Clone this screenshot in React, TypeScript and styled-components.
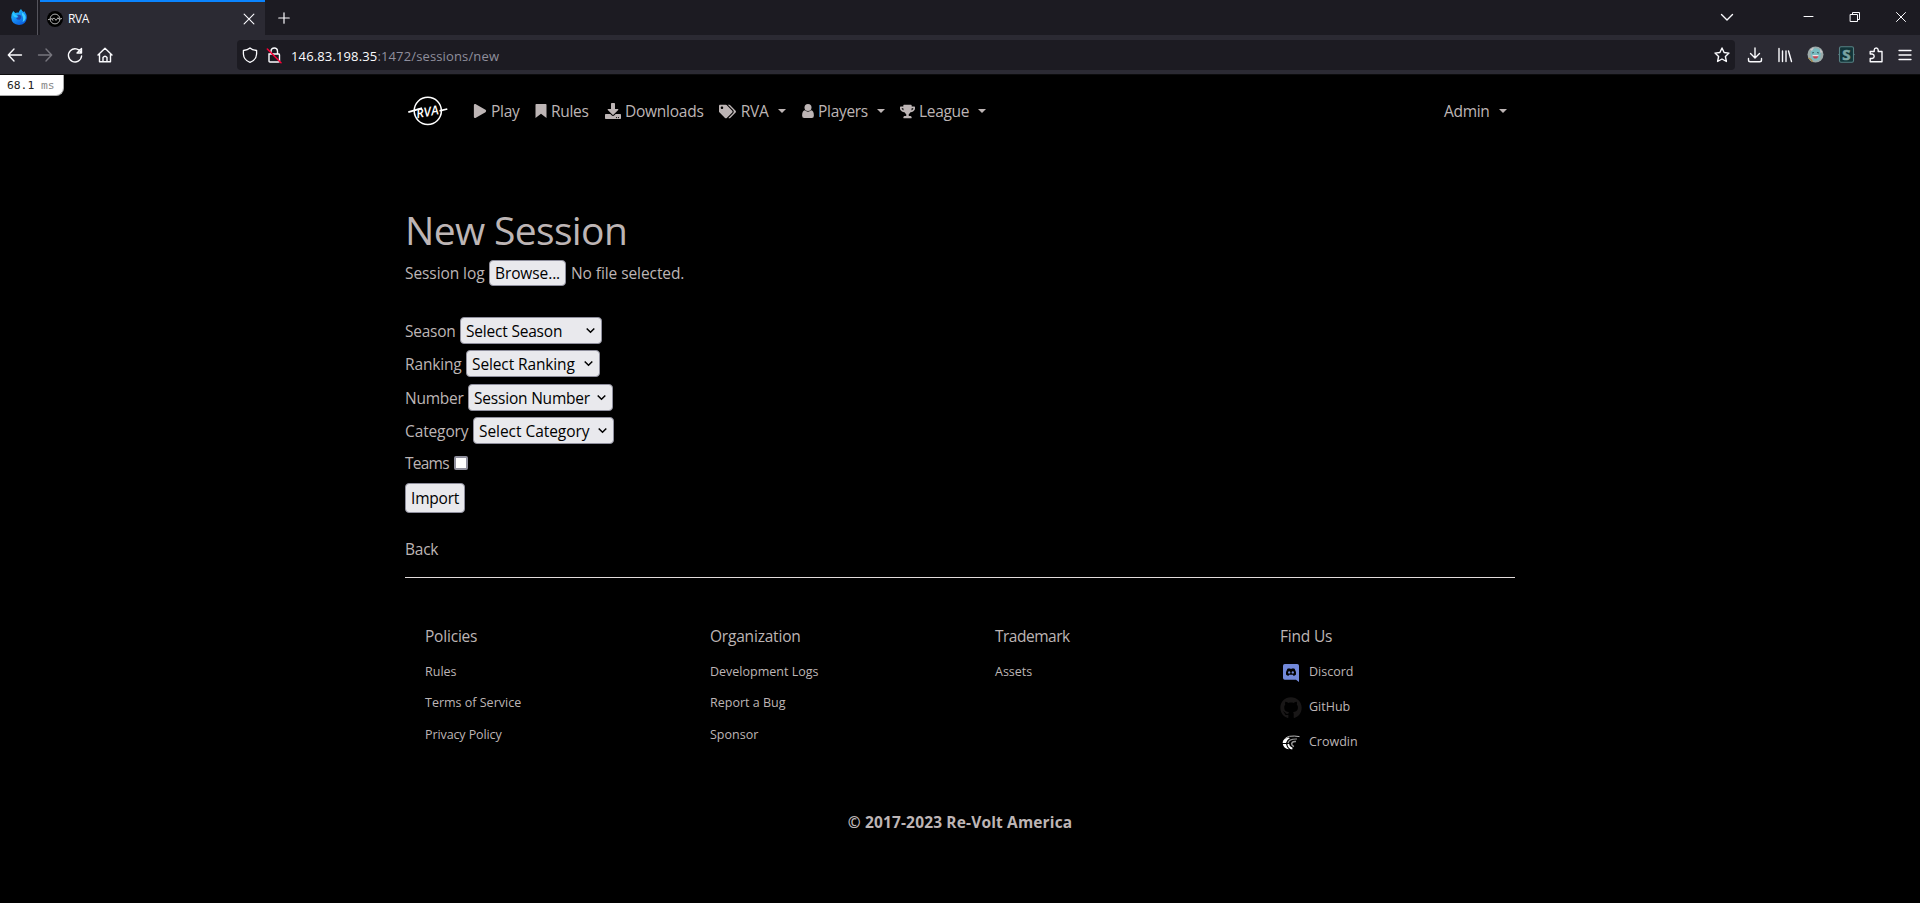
import React from 'react';
import styled, { createGlobalStyle } from 'styled-components';
import { FaPlay, FaDownload, FaTags, FaTrophy, FaGithub } from 'react-icons/fa';

const Global = createGlobalStyle`
  * { box-sizing: border-box; }
  body { margin: 0; background: #000; font-family: "Open Sans", "Noto Sans", sans-serif; color: #bdb5b5; overflow: hidden; }
  svg { display: block; flex: none; overflow: visible; }
  a { color: inherit; text-decoration: none; }
`;

const Page = styled.div`height: 903px; display: flex; flex-direction: column;`;

/* Browser chrome */
const TabBar = styled.div`height: 35px; background: #1c1b22; display: flex; color: #fbfbfe;`;
const PinnedTab = styled.div`width: 38px; padding: 8px 0 0 10px; border-right: 1px solid #55545c;`;
const Tab = styled.div`
  width: 225px; margin-left: 2px; padding: 0 10px 0 7px; border-top: 2px solid #0a84ff; background: #2b2a33;
  display: flex; align-items: center; font-size: 12px; letter-spacing: -0.4px;
`;
const TabTitle = styled.span`flex: 1; margin-left: 5px;`;
const NewTab = styled.div`padding: 12px 0 0 13px; flex: 1;`;
const WindowButtons = styled.div`display: flex; padding-top: 10px;`;
const WindowButton = styled.div<{ $w: number }>`width: ${p => p.$w}px;`;
const Toolbar = styled.div`
  height: 40px; background: #2b2a33; border-bottom: 1px solid #0c0c0d; display: flex; align-items: center;
`;
const NavButtons = styled.div`display: flex; gap: 14px; width: 237px; padding-left: 7px;`;
const UrlBar = styled.div`
  width: 1498px; height: 30px; border-radius: 4px; background: #1c1b22; display: flex; align-items: center; padding: 0 5px;
`;
const LockSlot = styled.span`margin-left: 8px;`;
const Url = styled.div`
  flex: 1; font-size: 13px; line-height: 20px; letter-spacing: 0.14px; color: #fbfbfe; margin-left: 9px; padding-top: 2px;
`;
const UrlPath = styled.span`color: #8f8f9d;`;
const ToolbarIcons = styled.div`display: flex; align-items: center; gap: 14px; margin-left: 12px;`;

/* Site */
const Timing = styled.div`
  width: 64px; height: 21px; background: #fff; color: #222; border: 1px solid #aaa; border-width: 0 1px 1px 0;
  border-bottom-right-radius: 8px; padding-left: 7px; font: 11.3px/22px "DejaVu Sans Mono", monospace;
`;
const Unit = styled.span`color: #888;`;
const Container = styled.div`width: 1110px; margin: 0 auto;`;
const NavBar = styled.nav`height: 54px; margin-top: -12px; display: flex; align-items: center; padding-left: 3px;`;
const NavItem = styled.a<{ $w: number; $s?: number; $gap?: number }>`
  width: ${p => p.$w}px; display: flex; align-items: center; gap: ${p => p.$gap ?? 4}px; white-space: nowrap;
  font-size: 15.5px; letter-spacing: ${p => p.$s ?? -0.3}px;
`;
const Brand = styled.div`width: 65px;`;
const Push = styled.div`flex: 1;`;
const Caret = styled.span`
  border: 4.5px solid transparent; border-top-color: currentColor; border-bottom: 0; margin-left: 5px;
`;
const Title = styled.h1`
  margin: 64px 0 0; height: 55px; font-size: 39px; line-height: 55px; font-weight: 400; letter-spacing: -0.65px;
`;
const Row = styled.div<{ $h: number; $s?: number }>`
  height: ${p => p.$h}px; display: flex; align-items: center; font-size: 15.5px; letter-spacing: ${p => p.$s ?? -0.25}px;
`;
const UploadRow = styled(Row)`margin-bottom: 26px; letter-spacing: -0.08px;`;
const BackRow = styled(Row)`margin-top: 17px;`;
const Label = styled.label<{ $w: number }>`width: ${p => p.$w}px; white-space: nowrap;`;
const Control = styled.button<{ $w: number; $h: number; $s?: number }>`
  width: ${p => p.$w}px; height: ${p => p.$h}px; border: 1px solid #8f8f9d; border-radius: 4px; background: #e9e9ed; color: #000;
  display: flex; align-items: center; justify-content: space-between; padding: 0 5px; white-space: nowrap;
  font: 15.5px "Open Sans", sans-serif; letter-spacing: ${p => p.$s ?? -0.2}px;
`;
const Note = styled.span`margin-left: 5px;`;
const Check = styled.input`
  appearance: none; width: 14px; height: 14px; margin: 0; border: 2px solid #8f8f9d; border-radius: 2px; background: #fff;
`;
const Rule = styled.hr`margin: 12px 0 0; border: 0; height: 1px; background: #e2dcdc;`;
const Footer = styled.footer`display: flex; padding: 42px 0 0 20px;`;
const Column = styled.div`flex: 0 0 285px; &:last-child { flex-basis: 235px; }`;
const Heading = styled.div<{ $s?: number }>`
  font-size: 15.5px; line-height: 32px; height: 36px; letter-spacing: ${p => p.$s ?? -0.2}px;
`;
const FootLink = styled.a<{ $h: number; $s?: number }>`
  height: ${p => p.$h}px; display: flex; align-items: center; font-size: 12.5px; letter-spacing: ${p => p.$s ?? 0}px;
`;
const IconSlot = styled.span<{ $top?: number }>`
  width: 22px; margin-right: 7px; padding-top: ${p => p.$top ?? 4}px; display: flex; justify-content: center;
`;
const Copyright = styled.div`
  margin-top: 53px; text-align: center; font-size: 15.5px; line-height: 24px; font-weight: 700; letter-spacing: 0.15px;
`;

const Line = ({ d, size = 16, w = 1.4, color = '#fbfbfe' }: { d: string; size?: number; w?: number; color?: string }) => (
  <svg width={size} height={size} viewBox="0 0 16 16" fill="none" stroke={color} strokeWidth={w} strokeLinecap="round" strokeLinejoin="round">
    <path d={d} />
  </svg>
);

const Logo = () => (
  <svg width="40" height="30" viewBox="0 0 40 30" fill="none" stroke="#fff" strokeWidth="1.5">
    <circle cx="19.8" cy="14.8" r="13.6" />
    <path d="M0.3 16.2 L9 13.6 L14 12.2 M31.5 14.9 L39.3 13" strokeWidth="1.8" />
    <text x="8" y="20.2" fill="#fff" stroke="none" fontSize="12.8" fontStyle="italic" fontWeight="600" fontFamily="Open Sans" transform="rotate(-10 20 15)">RVA</text>
  </svg>
);

const Bookmark = () => <svg width="12" height="14" viewBox="0 0 12 14" fill="currentColor"><path d="M1.2 0 H10.8 Q11.5 0 11.5 .8 V14 L6 9.8 L.5 14 V.8 Q.5 0 1.2 0Z" /></svg>;
const Person = () => (
  <svg width="12" height="14" viewBox="0 0 12 14" fill="currentColor">
    <circle cx="6" cy="3.6" r="3.5" />
    <path d="M2.8 6.3 Q6 9 9.2 6.3 Q11.8 6.6 11.9 11.5 Q11.9 14 9.8 14 H2.2 Q.1 14 .1 11.5 Q.2 6.6 2.8 6.3Z" />
  </svg>
);

const Firefox = () => (
  <svg width="18" height="18" viewBox="0 0 18 18">
    <defs><linearGradient id="ff" x1="0" y1="0" x2="0.6" y2="1"><stop offset="0" stopColor="#23d9ff" /><stop offset="0.6" stopColor="#168cf5" /><stop offset="1" stopColor="#0b5fde" /></linearGradient></defs>
    <path d="M3.2 3 L5.3 5 Q7 4.3 8.5 4.8 Q9.5 2 11 1 Q12 3 13.5 4 L14.5 3.2 Q17 6.5 16.8 10 Q16 16.8 9 17 Q1.7 16.5 1.2 9.5 Q1.3 5.5 3.2 3Z" fill="url(#ff)" />
    <path d="M12 4.5 Q16.5 7 15.5 11 Q14.5 13.5 12.5 14 Q14 10 12 7Z" fill="#3fd0ff" />
    <path d="M6.5 7 Q9 6 11.3 7.8 Q12 10.5 9.8 11.8 Q7 12 6.2 10.3 L8.5 9.3Z" fill="#2548a8" />
    <path d="M3 4 Q4 7 8.5 8 L6 9.5 Q4 9 3 7Z" fill="#33c9ff" />
  </svg>
);

const Favicon = () => (
  <svg width="16" height="16" viewBox="0 0 16 16" fill="none" stroke="#b0b0b0">
    <circle cx="8" cy="8" r="8" fill="#000" stroke="none" />
    <circle cx="8" cy="8" r="4.9" strokeWidth="1" />
    <path d="M1 8.7 L5 7.7 L6 9.7 M5.5 7.4 H7.6 L9 9.4 L11 6.7 L12 8.3 L15 7.5" strokeWidth="1" />
  </svg>
);

const Shield = () => <Line w={1.3} d="M8 1 C6.3 2.5 4 3.2 1.4 3.5 V7 C1.6 11 4.3 14 8 15.4 C11.7 14 14.4 11 14.6 7 V3.5 C12 3.2 9.7 2.5 8 1Z" />;
const Lock = () => (
  <svg width="16" height="18" viewBox="0 0 16 18" fill="none" stroke="#fbfbfe" strokeWidth="1.4" strokeLinecap="round">
    <path d="M5 7.5 V5 Q5.3 2 8.3 2 Q11.3 2 11.5 5 V7.5 M3 8 H13 Q13.5 8 13.5 9 V15 Q13.5 16 12.5 16 H4 Q3 16 3 15Z" />
    <path d="M1.3 3 L15 16.7" stroke="#ff0039" strokeWidth="1.5" />
  </svg>
);
const Avatar = () => (
  <svg width="17" height="17" viewBox="0 0 17 17">
    <circle cx="8.5" cy="8.5" r="8" fill="#9dabaa" />
    <path d="M3.5 7 Q4 2 9 2.3 Q14 2.5 13.7 8 L13 13 Q8.5 16.5 4.5 13Z" fill="#79bcc1" />
    <path d="M3 3.5 L7 1.5 L5 5Z M13 3 L15.5 6 L13.5 7Z" fill="#d3c9cc" />
    <path d="M5 7 L7 6.5 M10 6.5 L12 7" stroke="#385c66" strokeWidth="1" />
    <path d="M5.5 9.4 H11.5 Q11 12.5 8.5 12.5 Q6 12.5 5.5 9.4Z" fill="#c24553" />
    <path d="M5.5 9.2 H11.5 V10.2 H5.5Z" fill="#fff" />
    <path d="M1.5 12 L4 13.5 L5.5 16" stroke="#a78b4a" strokeWidth="1.4" fill="none" />
  </svg>
);
const Stylus = () => (
  <svg width="17" height="17" viewBox="0 0 17 17">
    <rect x="1.5" y="0.8" width="14" height="15.4" rx="1.5" fill="#123438" stroke="#568184" strokeWidth="1.1" />
    <path d="M0 8.5 L2 7 V10Z M17 8.5 L15 7 V10Z" fill="#568184" />
    <text x="8.5" y="13.8" textAnchor="middle" fontFamily="Open Sans" fontWeight="700" fontSize="15" fill="#79a3a2" stroke="#79a3a2" strokeWidth="0.6">S</text>
  </svg>
);
const Chevron = () => (
  <svg width="10" height="8" viewBox="0 0 10 8" fill="none" stroke="#000" strokeWidth="1.5"><path d="M0.7 1.5 L4.5 5.3 L8.3 1.5" /></svg>
);
const Discord = () => (
  <svg width="16" height="18" viewBox="0 0 16 18">
    <path d="M1.8 0 H14.2 Q16 0 16 1.8 V18 L13 15.8 H1.8 Q0 15.8 0 14 V1.8 Q0 0 1.8 0Z" fill="#7289da" />
    <path d="M4.4 4.8 L6.4 4.2 L6.8 4.8 H9.2 L9.6 4.2 L11.6 4.8 Q13.2 7.5 13 10.5 Q12 11.8 10.4 11.8 L9.8 10.8 H6.2 L5.6 11.8 Q4 11.8 3 10.5 Q2.8 7.5 4.4 4.8Z" fill="#000" />
    <ellipse cx="6.2" cy="8.4" rx="1.1" ry="1.2" fill="#7289da" /><ellipse cx="9.8" cy="8.4" rx="1.1" ry="1.2" fill="#7289da" />
  </svg>
);
const Crowdin = () => (
  <svg width="18" height="15" viewBox="0 0 18 15" fill="none">
    <path d="M17.5 1.6 Q12 .6 7.5 1.3 Q2.3 2.6 1.2 7" stroke="#bbb" strokeWidth="1" />
    <path d="M6 2.4 Q1 4 .6 8 H4 Q4.6 4.8 8 3Z" fill="#fff" />
    <path d="M.8 9 H4 Q4.4 12 7 14.2 Q1.8 14 .8 9Z" fill="#fff" />
    <path d="M15 4 Q7 3.7 6 8" stroke="#999" strokeWidth="1.2" />
    <path d="M6.2 9 Q6.8 12.8 10.4 13.6" stroke="#fff" strokeWidth="1.8" />
    <path d="M14 6.5 Q10 6 9.6 8.8 Q9.8 11 12 11.5" stroke="#999" strokeWidth="1.4" />
  </svg>
);

const SelectRow = ({ label, lw, text, w, h, s, ls }: { label: string; lw: number; text: string; w: number; h: number; s?: number; ls?: number }) => (
  <Row $h={h} $s={ls}><Label $w={lw}>{label}</Label><Control $w={w} $h={27} $s={s}>{text}<Chevron /></Control></Row>
);

export default function App() {
  return (
    <Page>
      <Global />
      <TabBar>
        <PinnedTab><Firefox /></PinnedTab>
        <Tab><Favicon /><TabTitle>RVA</TabTitle><Line size={12} w={1.5} d="M1.5 1.5 L14.5 14.5 M14.5 1.5 L1.5 14.5" /></Tab>
        <NewTab><Line size={12} w={1.6} d="M8 1 V15 M1 8 H15" /></NewTab>
        <WindowButtons>
          <WindowButton $w={82}><Line w={1.4} d="M2.5 4.5 L8 10 L13.5 4.5" /></WindowButton>
          <WindowButton $w={46}><Line w={1} d="M3 6.5 H12" /></WindowButton>
          <WindowButton $w={46}><Line w={1} d="M3.5 4.5 H10.5 V11.5 H3.5Z M5.5 4 V2.5 H12.5 V9.5 H11" /></WindowButton>
          <WindowButton $w={27}><Line w={1} d="M3.5 2.5 L12.5 11.5 M12.5 2.5 L3.5 11.5" /></WindowButton>
        </WindowButtons>
      </TabBar>
      <Toolbar>
        <NavButtons>
          <Line d="M7 2 L1.3 8 L7 14 M1.5 8 H14.5" />
          <Line color="#77767e" d="M9 2 L14.7 8 L9 14 M14.5 8 H1.5" />
          <Line d="M14 5.5 A6.6 6.6 0 1 0 14.6 9 M14.5 1.5 V6 H10 Z" />
          <Line d="M1 8 L8 1.3 L15 8 M2.5 7 V14.7 H13.5 V7 M6 14.5 V10.5 Q8 8 10 10.5 V14.5" />
        </NavButtons>
        <UrlBar>
          <Shield /><LockSlot><Lock /></LockSlot>
          <Url>146.83.198.35<UrlPath>:1472/sessions/new</UrlPath></Url>
          <Line w={1.4} d="M8 1 L10.1 5.5 L15 6.1 L11.4 9.5 L12.4 14.5 L8 12 L3.6 14.5 L4.6 9.5 L1 6.1 L5.9 5.5Z" />
        </UrlBar>
        <ToolbarIcons>
          <Line d="M8 1 V10.5 M3.5 6.5 L8 11 L12.5 6.5 M1.5 11.5 V13 Q1.5 14.8 3.3 14.8 H12.7 Q14.5 14.8 14.5 13 V11.5" />
          <Line d="M2 1.5 V14.5 M5.5 4 V14.5 M9 4 V14.5 M11.5 4 L14.5 14.5" />
          <Avatar />
          <Stylus />
          <Line d="M1.2 7 V4.5 H5.2 V3 Q5.4 1 7.2 1 Q9 1 9.2 3 V4.5 H13 V14.8 H1.2 V11.5 H3.2 Q5.2 11.2 5.2 9.3 Q5.2 7.3 3.2 7Z" />
          <Line d="M0 3.5 H12 M0 8 H12 M0 12.5 H12" w={1.3} />
        </ToolbarIcons>
      </Toolbar>
      <Timing>68.1 <Unit>ms</Unit></Timing>
      <Container>
        <NavBar>
          <Brand><Logo /></Brand>
          <NavItem $w={62}><FaPlay size={14} />Play</NavItem>
          <NavItem $w={70}><Bookmark />Rules</NavItem>
          <NavItem $w={114} $s={-0.25}><FaDownload size={16} />Downloads</NavItem>
          <NavItem $w={83} $gap={4.7}><FaTags size={17} />RVA<Caret /></NavItem>
          <NavItem $w={98}><Person />Players<Caret /></NavItem>
          <NavItem $w={98}><FaTrophy size={15} />League<Caret /></NavItem>
          <Push />
          <NavItem $w={71}>Admin<Caret /></NavItem>
        </NavBar>
        <Title>New Session</Title>
        <UploadRow $h={31}>
          <Label $w={84}>Session log</Label><Control $w={77} $h={26} $s={-0.1}>Browse...</Control><Note>No file selected.</Note>
        </UploadRow>
        <SelectRow label="Season" lw={55} text="Select Season" w={142} h={33} />
        <SelectRow label="Ranking" lw={61} text="Select Ranking" w={134} h={33} s={-0.12} ls={-0.15} />
        <SelectRow label="Number" lw={63} text="Session Number" w={145} h={35} />
        <SelectRow label="Category" lw={68} text="Select Category" w={141} h={31} s={-0.05} ls={-0.12} />
        <Row $h={33} $s={-0.75}><Label $w={49}>Teams</Label><Check type="checkbox" /></Row>
        <Row $h={37}><Control $w={60} $h={30}>Import</Control></Row>
        <BackRow $h={32}><a>Back</a></BackRow>
        <Rule />
        <Footer>
          <Column><Heading>Policies</Heading><FootLink $h={31}>Rules</FootLink><FootLink $h={31}>Terms of Service</FootLink><FootLink $h={32} $s={-0.1}>Privacy Policy</FootLink></Column>
          <Column><Heading>Organization</Heading><FootLink $h={31}>Development Logs</FootLink><FootLink $h={31}>Report a Bug</FootLink><FootLink $h={32}>Sponsor</FootLink></Column>
          <Column><Heading $s={-0.5}>Trademark</Heading><FootLink $h={31}>Assets</FootLink></Column>
          <Column>
            <Heading>Find Us</Heading>
            <FootLink $h={31}><IconSlot $top={2}><Discord /></IconSlot>Discord</FootLink>
            <FootLink $h={38}><IconSlot><FaGithub size={22} color="#191717" /></IconSlot>GitHub</FootLink>
            <FootLink $h={32}><IconSlot $top={3}><Crowdin /></IconSlot>Crowdin</FootLink>
          </Column>
        </Footer>
        <Copyright>© 2017-2023 Re-Volt America</Copyright>
      </Container>
    </Page>
  );
}
